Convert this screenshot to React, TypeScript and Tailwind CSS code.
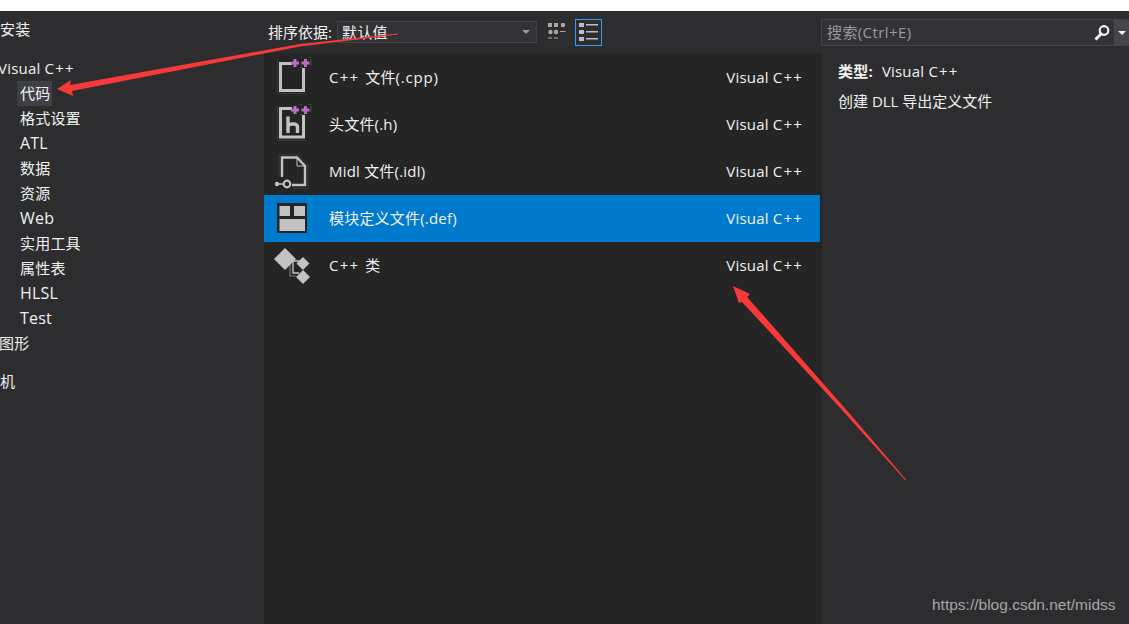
const treeItems = ["代码", "格式设置", "ATL", "数据", "资源", "Web", "实用工具", "属性表", "HLSL", "Test"];
const latinItems = ["ATL", "Web", "HLSL", "Test"];

function PlusMarks() {
  return (
    <>
      <path d="M26.500 3.500H28M35 3.500H37M37 5V11M26 13.500H28" stroke="#4a4a4c" strokeWidth="1" />
      <path d="M21 5V13M17 9H25M31.500 5V13M27.500 9H35.500" stroke="#b86fc0" strokeWidth="3" />
    </>
  );
}

function DocIcon() {
  return (
    <svg width="40" height="47" viewBox="0 0 40 47" fill="none" className="shrink-0">
      <path d="M3.500 7V39.500H32" stroke="#3a3a3c" strokeWidth="1" />
      <path d="M18 9.500H6.500V36.500H29.500V14" stroke="#c2c2c2" strokeWidth="3" />
      <PlusMarks />
    </svg>
  );
}

function HeaderIcon() {
  return (
    <svg width="40" height="47" viewBox="0 0 40 47" fill="none" className="shrink-0">
      <path d="M3.500 5V39.500H32" stroke="#3a3a3c" strokeWidth="1" />
      <path d="M18 7.500H6.500V36H29.500V14" stroke="#c2c2c2" strokeWidth="3" />
      <path d="M14 15.500V32M14 25C15 22.500 23.500 22 23.500 26V32" stroke="#c2c2c2" strokeWidth="3.400" />
      <PlusMarks />
    </svg>
  );
}

function MidlIcon() {
  return (
    <svg width="40" height="47" viewBox="0 0 40 47" fill="none" className="shrink-0">
      <path d="M5 28V6.500H24L34 17V40.500H18" stroke="#3a3a3c" strokeWidth="1" />
      <path d="M8 29V9.500H23L31 18V37H18" stroke="#c2c2c2" strokeWidth="2.400" />
      <path d="M23 10V18H31" stroke="#c2c2c2" strokeWidth="1" />
      <circle cx="13" cy="36" r="3.300" stroke="#c2c2c2" strokeWidth="2.200" />
      <circle cx="3" cy="36" r="2.200" fill="#c2c2c2" />
      <path d="M4 36H10" stroke="#c2c2c2" strokeWidth="1.500" />
    </svg>
  );
}

function ModuleIcon() {
  return (
    <svg width="40" height="47" viewBox="0 0 40 47" fill="none" className="shrink-0">
      <rect x="3" y="8" width="30" height="30" fill="#252526" />
      <rect x="5.500" y="11" width="10.500" height="10" fill="#c2c2c2" />
      <rect x="20" y="11" width="11" height="10" fill="#c2c2c2" />
      <rect x="5.500" y="24" width="25.500" height="12" fill="#c2c2c2" />
    </svg>
  );
}

function ClassIcon() {
  return (
    <svg width="40" height="47" viewBox="0 0 40 47" fill="none" className="shrink-0">
      <path d="M16 22V34H22" stroke="#777777" strokeWidth="1.200" />
      <path d="M12 19H26M19 19V31H25" stroke="#c2c2c2" strokeWidth="1.400" />
      <path d="M11 6L22 17L11 28L0 17Z" fill="#c2c2c2" />
      <path d="M29 15L35.500 21.500L29 28L22.500 21.500Z" fill="#c2c2c2" />
      <path d="M29 28L36 35L29 42L22 35Z" fill="#c2c2c2" />
    </svg>
  );
}

// the ++ sits wider in the reference font than in Open Sans
function Cpp() {
  return <span className="tracking-[1.2px]">C++</span>;
}

const templates = [
  { id: "cpp", name: <><Cpp /><span className="ml-[6px]">文件<span className="tracking-[0.8px]">(.cpp)</span></span></>, icon: <DocIcon /> },
  { id: "h", name: "头文件(.h)", icon: <HeaderIcon /> },
  { id: "idl", name: "Midl 文件(.idl)", icon: <MidlIcon /> },
  { id: "def", name: "模块定义文件(.def)", icon: <ModuleIcon />, selected: true },
  { id: "cls", name: <><Cpp /><span className="ml-[6px]">类</span></>, icon: <ClassIcon /> },
];

function App() {
  return (
    <div className="relative w-[1129px] h-[624px] overflow-hidden bg-white text-[15px] tracking-[0.2px] text-[#f1f1f1] font-['Open_Sans','Noto_Sans_CJK_SC',sans-serif]">
      <div className="h-[11px] bg-white" />
      <div className="flex h-[613px] bg-[#2d2d30]">
        {/* left tree */}
        <div className="w-[264px] shrink-0 pt-[6px]">
          <div className="h-[25px] leading-[25px]">安装</div>
          <div className="mt-[14px] h-[25px] leading-[25px] -ml-[2px]">
            Visual <Cpp />
          </div>
          {treeItems.map((item, i) => (
            <div
              key={item}
              className={
                i === 0
                  ? "ml-[17px] w-[35px] h-[25px] leading-[25px] pl-[3px] whitespace-nowrap bg-[#3f3f46]"
                  : latinItems.includes(item)
                    ? "ml-[20px] h-[25px] leading-[25px] text-[16px]"
                    : "ml-[20px] h-[25px] leading-[25px]"
              }
            >
              {item}
            </div>
          ))}
          <div className="h-[25px] leading-[25px] -ml-[1px]">图形</div>
          <div className="mt-[13px] h-[25px] leading-[25px]">机</div>
        </div>

        {/* right side */}
        <div className="flex-1 flex flex-col min-w-0">
          <div className="h-[42px] flex items-start shrink-0">
            <div className="ml-[4px] mt-[9px] h-[24px] leading-[24px] w-[69px] tracking-normal whitespace-nowrap">排序依据:</div>
            <div className="mt-[10px] w-[200px] h-[22px] flex items-center justify-between bg-[#333337] border border-[#434346] pl-[4px] pr-[6px]">
              <span>默认值</span>
              <span className="w-0 h-0 border-x-[4px] border-x-transparent border-t-[4px] border-t-[#999999]" />
            </div>
            <svg width="18" height="19" viewBox="0 0 18 19" className="ml-[11px] mt-[12px] shrink-0" fill="#a8a8a8">
              <rect x="0" y="0" width="4" height="4" />
              <rect x="6" y="0" width="4" height="4" />
              <circle cx="15" cy="2" r="2.200" />
              <circle cx="2.500" cy="9" r="2.200" />
              <circle cx="8" cy="9" r="2.200" />
              <rect x="12" y="8" width="5.500" height="1" />
              <rect x="0" y="14.500" width="4" height="1" />
              <rect x="6" y="14.500" width="4" height="1" />
            </svg>
            <div className="ml-[9px] mt-[8px] w-[27px] h-[27px] bg-[#3399ff] p-px shrink-0">
              <div className="w-full h-full bg-[#2d2d30] flex items-center justify-center">
                <svg width="19" height="19" viewBox="0 0 19 19" fill="#bdbdbd">
                  <rect x="0" y="0" width="5" height="4" />
                  <rect x="0" y="7" width="5" height="4" />
                  <rect x="0" y="14" width="5" height="4" />
                  <rect x="7" y="1" width="12" height="1.500" />
                  <rect x="7" y="8" width="12" height="1.500" />
                  <rect x="7" y="15" width="12" height="1.500" />
                </svg>
              </div>
            </div>
            <div className="ml-[219px] mt-[8px] flex-1 h-[27px] flex items-center bg-[#333337] border border-[#434346] border-r-0 pl-[5px]">
              <span className="flex-1 tracking-[0.4px] text-[#999999]">搜索(Ctrl+E)</span>
              <svg width="18" height="18" viewBox="0 0 18 18" fill="none" className="mr-[3px]">
                <circle cx="11" cy="6.500" r="4.300" stroke="#f1f1f1" strokeWidth="2.200" />
                <path d="M8 10L2.500 15.500" stroke="#f1f1f1" strokeWidth="3" />
              </svg>
              <div className="w-[15px] h-full bg-[#46464a] flex items-center justify-center">
                <span className="w-0 h-0 border-x-[4px] border-x-transparent border-t-[4px] border-t-[#f1f1f1]" />
              </div>
            </div>
          </div>

          <div className="flex flex-1 min-h-0">
            <div className="w-[558px] shrink-0 bg-[#252526] pt-[1px]">
              {templates.map((t) => (
                <div
                  key={t.id}
                  className={
                    t.selected
                      ? "w-[556px] h-[47px] flex items-center pl-[10px] pr-[17px] bg-[#007acc]"
                      : "w-[556px] h-[47px] flex items-center pl-[10px] pr-[17px]"
                  }
                >
                  {t.icon}
                  <span className="ml-[15px] flex-1">{t.name}</span>
                  <span>
                    Visual <Cpp />
                  </span>
                </div>
              ))}
            </div>
            <div className="flex-1 pl-[16px] pt-[6px]">
              <div className="h-[24px] leading-[24px] whitespace-nowrap">
                <span className="font-bold">类型:</span>
                <span className="ml-[9px]">
                  Visual <Cpp />
                </span>
              </div>
              <div className="mt-[6px] h-[24px] leading-[24px] tracking-normal">创建 DLL 导出定义文件</div>
            </div>
          </div>
        </div>
      </div>

      {/* red annotation arrows */}
      <svg width="1129" height="624" viewBox="0 0 1129 624" className="absolute left-0 top-0 pointer-events-none">
        <polygon points="57,89 71,80 70,85 300,44 398,33.500 398,34.500 300,46.500 72,91 73,96" fill="#f93939" />
        <polygon points="733,286 750,294 747,297 850,414 906,479.500 905.500,480.500 842,410 742,302 739,303" fill="#f93939" />
      </svg>

      <div className="absolute left-[932px] top-[596px] text-[15.500px] tracking-normal leading-[18px] text-[#a6a6a6] font-['Liberation_Sans',sans-serif]">
        https://blog.csdn.net/midss
      </div>
    </div>
  );
}

export default App;
